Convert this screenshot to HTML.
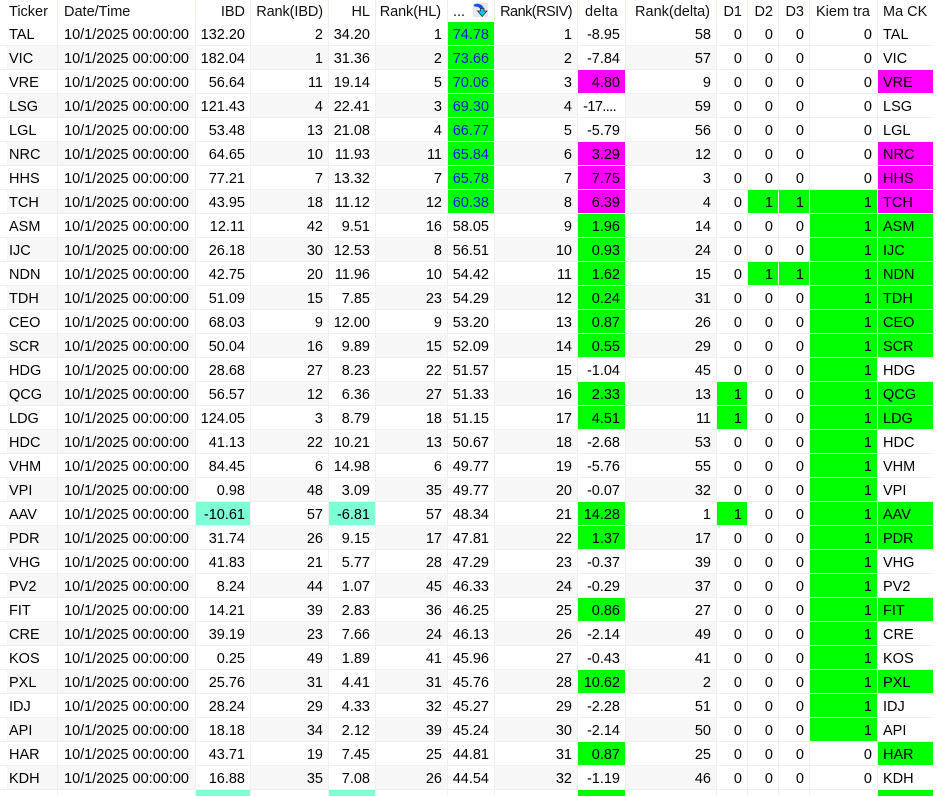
<!DOCTYPE html>
<html><head><meta charset="utf-8"><style>
html,body{margin:0;padding:0;background:#fff;width:938px;height:796px;overflow:hidden}
#w{position:relative;width:938px;height:796px;overflow:hidden;background:#fff}
table{position:absolute;left:0;top:0;border-collapse:separate;border-spacing:0;table-layout:fixed;width:933px;font:14.5px "Liberation Sans",sans-serif;color:#000}
th,td{padding:0 5px 0 0;text-align:right;white-space:nowrap;overflow:hidden;box-sizing:border-box;font-weight:400;background-clip:padding-box}
th{height:22px;border-right:1px solid #f1ede6;color:#111;padding-top:1px}
td{height:24px;border-right:1px solid #f0f0f0;border-bottom:1px solid #f0f0f0;padding-top:2px}
th:nth-child(1),td:nth-child(1){text-align:left;padding-left:9px}
th:nth-child(2),td:nth-child(2){text-align:left;padding-left:6px}
th:nth-child(15),td:nth-child(15){text-align:left;padding-left:5px;border-right:0}
tbody tr:nth-child(even) td:nth-child(1),tbody tr:nth-child(even) td:nth-child(2),tbody tr:nth-child(even) td:nth-child(4),tbody tr:nth-child(even) td:nth-child(6),tbody tr:nth-child(even) td:nth-child(8),tbody tr:nth-child(even) td:nth-child(10){background-color:#f7f7f7}
tbody tr:nth-child(even) td:nth-child(1){background:linear-gradient(90deg,#fff 7px,#f7f7f7 7px)}
tbody td:nth-child(7){color:#1a1ae0}
tbody td.g{background-color:#00ff00!important}
tbody td.m{background-color:#ff00ff!important}
tbody td.a{background-color:#7fffd4!important}
svg{position:absolute;left:473px;top:3px}
</style></head><body><div id="w">
<table>
<colgroup><col style="width:58px"><col style="width:138px"><col style="width:55px"><col style="width:78px"><col style="width:47px"><col style="width:72px"><col style="width:47px"><col style="width:83px"><col style="width:48px"><col style="width:91px"><col style="width:31px"><col style="width:31px"><col style="width:31px"><col style="width:68px"><col style="width:55px"></colgroup>
<thead><tr><th>Ticker</th><th>Date/Time</th><th>IBD</th><th style="letter-spacing:-.1px">Rank(IBD)</th><th>HL</th><th style="padding-right:6px;letter-spacing:-.1px">Rank(HL)</th><th style="text-align:left;padding-left:5px">...</th><th style="letter-spacing:-.55px">Rank(RSIV)</th><th style="padding-right:7px;letter-spacing:.3px">delta</th><th style="padding-right:6px">Rank(delta)</th><th>D1</th><th>D2</th><th>D3</th><th style="padding-right:7px">Kiem tra</th><th>Ma CK</th></tr></thead>
<tbody>
<tr><td>TAL</td><td>10/1/2025 00:00:00</td><td>132.20</td><td>2</td><td>34.20</td><td>1</td><td class="g">74.78</td><td>1</td><td>-8.95</td><td>58</td><td>0</td><td>0</td><td>0</td><td>0</td><td>TAL</td></tr>
<tr><td>VIC</td><td>10/1/2025 00:00:00</td><td>182.04</td><td>1</td><td>31.36</td><td>2</td><td class="g">73.66</td><td>2</td><td>-7.84</td><td>57</td><td>0</td><td>0</td><td>0</td><td>0</td><td>VIC</td></tr>
<tr><td>VRE</td><td>10/1/2025 00:00:00</td><td>56.64</td><td>11</td><td>19.14</td><td>5</td><td class="g">70.06</td><td>3</td><td class="m">4.80</td><td>9</td><td>0</td><td>0</td><td>0</td><td>0</td><td class="m">VRE</td></tr>
<tr><td>LSG</td><td>10/1/2025 00:00:00</td><td>121.43</td><td>4</td><td>22.41</td><td>3</td><td class="g">69.30</td><td>4</td><td style="padding-right:9px;letter-spacing:-.6px">-17....</td><td>59</td><td>0</td><td>0</td><td>0</td><td>0</td><td>LSG</td></tr>
<tr><td>LGL</td><td>10/1/2025 00:00:00</td><td>53.48</td><td>13</td><td>21.08</td><td>4</td><td class="g">66.77</td><td>5</td><td>-5.79</td><td>56</td><td>0</td><td>0</td><td>0</td><td>0</td><td>LGL</td></tr>
<tr><td>NRC</td><td>10/1/2025 00:00:00</td><td>64.65</td><td>10</td><td>11.93</td><td>11</td><td class="g">65.84</td><td>6</td><td class="m">3.29</td><td>12</td><td>0</td><td>0</td><td>0</td><td>0</td><td class="m">NRC</td></tr>
<tr><td>HHS</td><td>10/1/2025 00:00:00</td><td>77.21</td><td>7</td><td>13.32</td><td>7</td><td class="g">65.78</td><td>7</td><td class="m">7.75</td><td>3</td><td>0</td><td>0</td><td>0</td><td>0</td><td class="m">HHS</td></tr>
<tr><td>TCH</td><td>10/1/2025 00:00:00</td><td>43.95</td><td>18</td><td>11.12</td><td>12</td><td class="g">60.38</td><td>8</td><td class="m">6.39</td><td>4</td><td>0</td><td class="g">1</td><td class="g">1</td><td class="g">1</td><td class="m">TCH</td></tr>
<tr><td>ASM</td><td>10/1/2025 00:00:00</td><td>12.11</td><td>42</td><td>9.51</td><td>16</td><td style="color:#000">58.05</td><td>9</td><td class="g">1.96</td><td>14</td><td>0</td><td>0</td><td>0</td><td class="g">1</td><td class="g">ASM</td></tr>
<tr><td>IJC</td><td>10/1/2025 00:00:00</td><td>26.18</td><td>30</td><td>12.53</td><td>8</td><td style="color:#000">56.51</td><td>10</td><td class="g">0.93</td><td>24</td><td>0</td><td>0</td><td>0</td><td class="g">1</td><td class="g">IJC</td></tr>
<tr><td>NDN</td><td>10/1/2025 00:00:00</td><td>42.75</td><td>20</td><td>11.96</td><td>10</td><td style="color:#000">54.42</td><td>11</td><td class="g">1.62</td><td>15</td><td>0</td><td class="g">1</td><td class="g">1</td><td class="g">1</td><td class="g">NDN</td></tr>
<tr><td>TDH</td><td>10/1/2025 00:00:00</td><td>51.09</td><td>15</td><td>7.85</td><td>23</td><td style="color:#000">54.29</td><td>12</td><td class="g">0.24</td><td>31</td><td>0</td><td>0</td><td>0</td><td class="g">1</td><td class="g">TDH</td></tr>
<tr><td>CEO</td><td>10/1/2025 00:00:00</td><td>68.03</td><td>9</td><td>12.00</td><td>9</td><td style="color:#000">53.20</td><td>13</td><td class="g">0.87</td><td>26</td><td>0</td><td>0</td><td>0</td><td class="g">1</td><td class="g">CEO</td></tr>
<tr><td>SCR</td><td>10/1/2025 00:00:00</td><td>50.04</td><td>16</td><td>9.89</td><td>15</td><td style="color:#000">52.09</td><td>14</td><td class="g">0.55</td><td>29</td><td>0</td><td>0</td><td>0</td><td class="g">1</td><td class="g">SCR</td></tr>
<tr><td>HDG</td><td>10/1/2025 00:00:00</td><td>28.68</td><td>27</td><td>8.23</td><td>22</td><td style="color:#000">51.57</td><td>15</td><td>-1.04</td><td>45</td><td>0</td><td>0</td><td>0</td><td class="g">1</td><td>HDG</td></tr>
<tr><td>QCG</td><td>10/1/2025 00:00:00</td><td>56.57</td><td>12</td><td>6.36</td><td>27</td><td style="color:#000">51.33</td><td>16</td><td class="g">2.33</td><td>13</td><td class="g">1</td><td>0</td><td>0</td><td class="g">1</td><td class="g">QCG</td></tr>
<tr><td>LDG</td><td>10/1/2025 00:00:00</td><td>124.05</td><td>3</td><td>8.79</td><td>18</td><td style="color:#000">51.15</td><td>17</td><td class="g">4.51</td><td>11</td><td class="g">1</td><td>0</td><td>0</td><td class="g">1</td><td class="g">LDG</td></tr>
<tr><td>HDC</td><td>10/1/2025 00:00:00</td><td>41.13</td><td>22</td><td>10.21</td><td>13</td><td style="color:#000">50.67</td><td>18</td><td>-2.68</td><td>53</td><td>0</td><td>0</td><td>0</td><td class="g">1</td><td>HDC</td></tr>
<tr><td>VHM</td><td>10/1/2025 00:00:00</td><td>84.45</td><td>6</td><td>14.98</td><td>6</td><td style="color:#000">49.77</td><td>19</td><td>-5.76</td><td>55</td><td>0</td><td>0</td><td>0</td><td class="g">1</td><td>VHM</td></tr>
<tr><td>VPI</td><td>10/1/2025 00:00:00</td><td>0.98</td><td>48</td><td>3.09</td><td>35</td><td style="color:#000">49.77</td><td>20</td><td>-0.07</td><td>32</td><td>0</td><td>0</td><td>0</td><td class="g">1</td><td>VPI</td></tr>
<tr><td>AAV</td><td>10/1/2025 00:00:00</td><td class="a">-10.61</td><td>57</td><td class="a">-6.81</td><td>57</td><td style="color:#000">48.34</td><td>21</td><td class="g">14.28</td><td>1</td><td class="g">1</td><td>0</td><td>0</td><td class="g">1</td><td class="g">AAV</td></tr>
<tr><td>PDR</td><td>10/1/2025 00:00:00</td><td>31.74</td><td>26</td><td>9.15</td><td>17</td><td style="color:#000">47.81</td><td>22</td><td class="g">1.37</td><td>17</td><td>0</td><td>0</td><td>0</td><td class="g">1</td><td class="g">PDR</td></tr>
<tr><td>VHG</td><td>10/1/2025 00:00:00</td><td>41.83</td><td>21</td><td>5.77</td><td>28</td><td style="color:#000">47.29</td><td>23</td><td>-0.37</td><td>39</td><td>0</td><td>0</td><td>0</td><td class="g">1</td><td>VHG</td></tr>
<tr><td>PV2</td><td>10/1/2025 00:00:00</td><td>8.24</td><td>44</td><td>1.07</td><td>45</td><td style="color:#000">46.33</td><td>24</td><td>-0.29</td><td>37</td><td>0</td><td>0</td><td>0</td><td class="g">1</td><td>PV2</td></tr>
<tr><td>FIT</td><td>10/1/2025 00:00:00</td><td>14.21</td><td>39</td><td>2.83</td><td>36</td><td style="color:#000">46.25</td><td>25</td><td class="g">0.86</td><td>27</td><td>0</td><td>0</td><td>0</td><td class="g">1</td><td class="g">FIT</td></tr>
<tr><td>CRE</td><td>10/1/2025 00:00:00</td><td>39.19</td><td>23</td><td>7.66</td><td>24</td><td style="color:#000">46.13</td><td>26</td><td>-2.14</td><td>49</td><td>0</td><td>0</td><td>0</td><td class="g">1</td><td>CRE</td></tr>
<tr><td>KOS</td><td>10/1/2025 00:00:00</td><td>0.25</td><td>49</td><td>1.89</td><td>41</td><td style="color:#000">45.96</td><td>27</td><td>-0.43</td><td>41</td><td>0</td><td>0</td><td>0</td><td class="g">1</td><td>KOS</td></tr>
<tr><td>PXL</td><td>10/1/2025 00:00:00</td><td>25.76</td><td>31</td><td>4.41</td><td>31</td><td style="color:#000">45.76</td><td>28</td><td class="g">10.62</td><td>2</td><td>0</td><td>0</td><td>0</td><td class="g">1</td><td class="g">PXL</td></tr>
<tr><td>IDJ</td><td>10/1/2025 00:00:00</td><td>28.24</td><td>29</td><td>4.33</td><td>32</td><td style="color:#000">45.27</td><td>29</td><td>-2.28</td><td>51</td><td>0</td><td>0</td><td>0</td><td class="g">1</td><td>IDJ</td></tr>
<tr><td>API</td><td>10/1/2025 00:00:00</td><td>18.18</td><td>34</td><td>2.12</td><td>39</td><td style="color:#000">45.24</td><td>30</td><td>-2.14</td><td>50</td><td>0</td><td>0</td><td>0</td><td class="g">1</td><td>API</td></tr>
<tr><td>HAR</td><td>10/1/2025 00:00:00</td><td>43.71</td><td>19</td><td>7.45</td><td>25</td><td style="color:#000">44.81</td><td>31</td><td class="g">0.87</td><td>25</td><td>0</td><td>0</td><td>0</td><td>0</td><td class="g">HAR</td></tr>
<tr><td>KDH</td><td>10/1/2025 00:00:00</td><td>16.88</td><td>35</td><td>7.08</td><td>26</td><td style="color:#000">44.54</td><td>32</td><td>-1.19</td><td>46</td><td>0</td><td>0</td><td>0</td><td>0</td><td>KDH</td></tr>
<tr><td></td><td></td><td class="a"></td><td></td><td class="a"></td><td></td><td></td><td></td><td class="g"></td><td></td><td></td><td></td><td></td><td></td><td class="g"></td></tr>
</tbody></table>
<svg width="15" height="14" viewBox="0 0 15 14"><rect width="15" height="14" fill="#e8e8e8"/><path d="M0.5 2 Q2 0.5 5 0.8 Q9.5 1.2 11 6 L7.5 6.5 Q6.5 3.5 1.5 3.5 Z" fill="#1c4fe0"/><path d="M7.5 5.5 H11 V8 H14 L9.2 13.5 L4.5 8 H7.5 Z" fill="#10c4f5" stroke="#2a2a2a" stroke-width=".7"/></svg>
</div></body></html>
